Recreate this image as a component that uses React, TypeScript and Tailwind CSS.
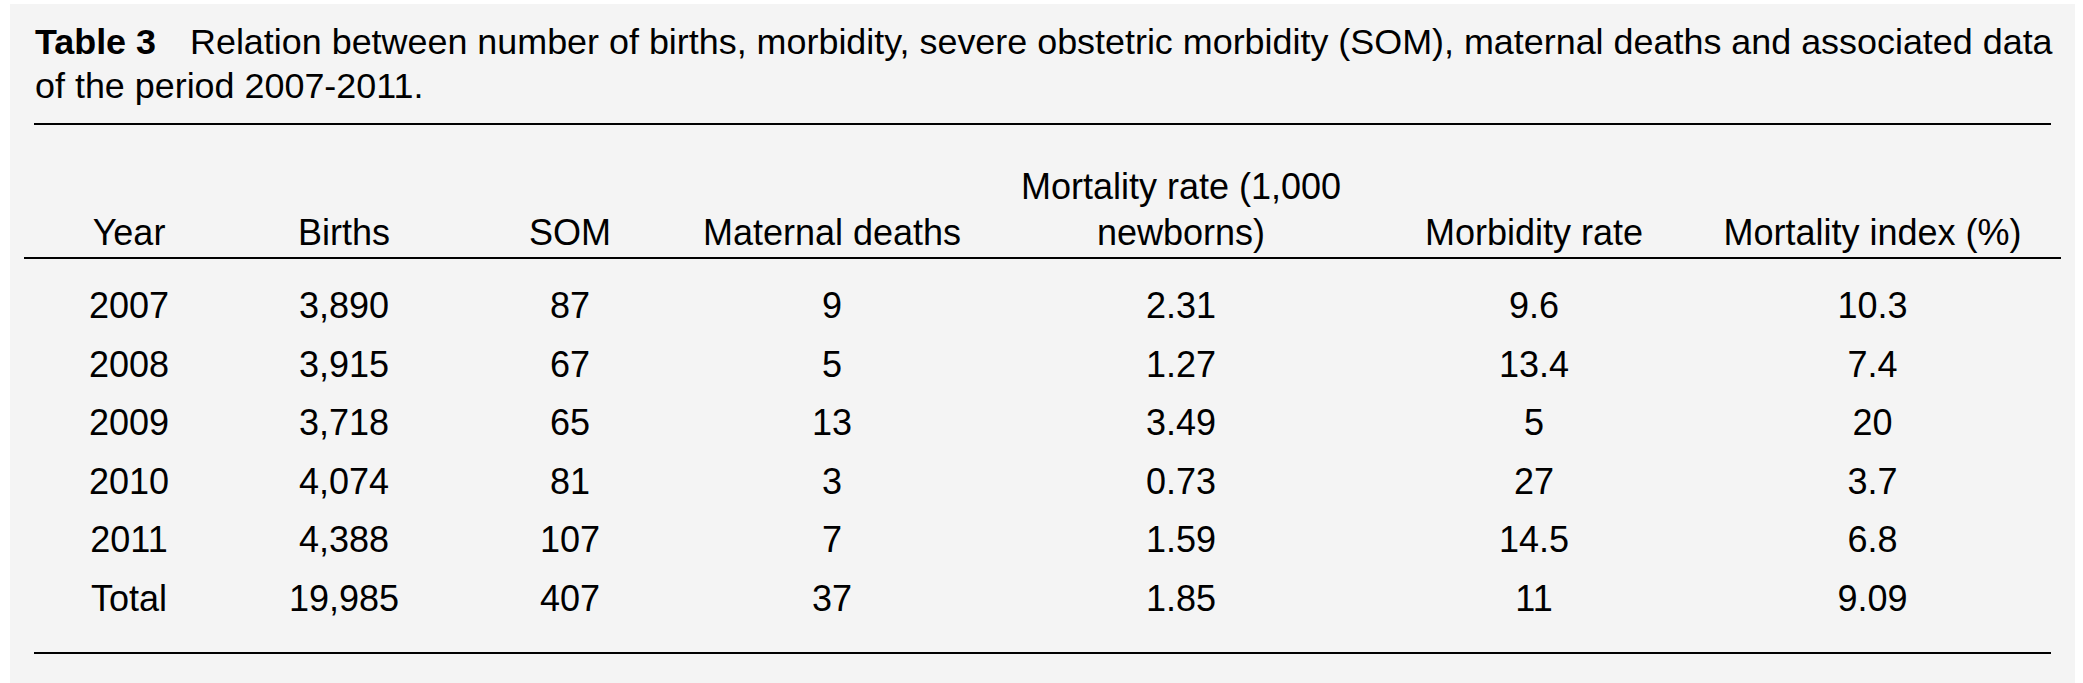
import React from "react";

const rows = [
  ["2007", "3,890", "87", "9", "2.31", "9.6", "10.3"],
  ["2008", "3,915", "67", "5", "1.27", "13.4", "7.4"],
  ["2009", "3,718", "65", "13", "3.49", "5", "20"],
  ["2010", "4,074", "81", "3", "0.73", "27", "3.7"],
  ["2011", "4,388", "107", "7", "1.59", "14.5", "6.8"],
  ["Total", "19,985", "407", "37", "1.85", "11", "9.09"],
];

const headers = [
  "Year",
  "Births",
  "SOM",
  "Maternal deaths",
  "Mortality rate (1,000 newborns)",
  "Morbidity rate",
  "Mortality index (%)",
];

const grid = "grid grid-cols-[210px_220px_232px_292px_406px_300px_377px]";

export default function App() {
  return (
    <div className="w-[2083px] h-[683px] bg-white overflow-hidden font-['Liberation_Sans',Arial,sans-serif] text-black">
      <div className="ml-[10px] mt-[4px] w-[2065px] h-[679px] bg-[#f4f4f4] pt-[16px]">
        <div className="pl-[25px] text-[35.9px] leading-[44px]">
          <div className="whitespace-nowrap">
            <span className="font-bold">Table 3</span>
            <span className="inline-block w-[34px]" />
            <span>Relation between number of births, morbidity, severe obstetric morbidity (SOM), maternal deaths and associated data</span>
          </div>
          <div>of the period 2007-2011.</div>
        </div>
        <div className="mx-[24px] mt-[15px] h-[2px] bg-black" />
        <div className="mx-[14px] mt-[39px]">
          <div className={`${grid} items-end border-b-2 border-black pb-[1px] text-[36px] leading-[46px]`}>
            {headers.map((h, i) => (
              <div key={i} className={`text-center ${i === 4 ? "px-[40px]" : ""}`}>
                {h}
              </div>
            ))}
          </div>
          <div className="pt-[18px]">
            {rows.map((r, ri) => (
              <div key={ri} className={`${grid} h-[58.6px] text-[36px] leading-[58.6px]`}>
                {r.map((c, ci) => (
                  <div key={ci} className="text-center">
                    {c}
                  </div>
                ))}
              </div>
            ))}
          </div>
        </div>
        <div className="mx-[24px] mt-[23px] h-[2px] bg-black" />
      </div>
    </div>
  );
}
